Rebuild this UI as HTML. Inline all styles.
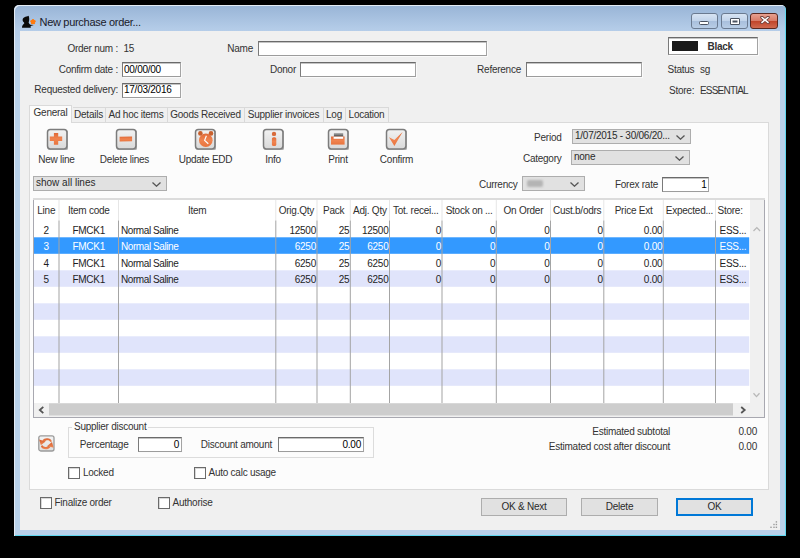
<!DOCTYPE html>
<html><head><meta charset="utf-8"><style>
html,body{margin:0;padding:0;width:800px;height:558px;overflow:hidden;background:#000;font-family:"Liberation Sans", sans-serif;}
.abs,.t,.frame,.client,.edit,.wbtn,.cbtn,.panel,.tab,.tabsel,.ico,.combo,.table,.group,.chk,.btn{position:absolute;box-sizing:border-box;}
.t{white-space:nowrap;}
.frame{background:linear-gradient(#98b4d6 0px,#a6c0df 12px,#b4cce8 24px,#b9d1ea 40px,#b9d1ea 100%);border-radius:5px 5px 0 0;box-shadow:inset 1px 1px 0 #e4ecf5, inset -1px -1px 0 #5fd8f0;}
.client{background:#f0f0f0;}
.edit{background:#fff;border:1px solid #a4a4a4;border-top-color:#6a6a6a;border-left-color:#7a7a7a;border-bottom-color:#9c9c9c;box-shadow:inset 0 1px 0 #c4c4c4, 1px 1px 0 #fafafa;}
.wbtn{border:1px solid #6a7a90;border-radius:3px;background:linear-gradient(#d7e4f3 0%,#c1d3ea 50%,#a8bfdc 51%,#b8cde6 100%);}
.cbtn{border:1px solid #5a2820;border-radius:3px;background:linear-gradient(#e8a090 0%,#d77a66 50%,#c0442a 51%,#d06a50 100%);}
.panel{background:#fcfcfc;border:1px solid #dadada;}
.tab{background:#f0f0f0;border:1px solid #d9d9d9;border-bottom:none;border-left:none;}
.tabsel{background:#fcfcfc;border:1px solid #dadada;border-bottom:none;}
.ico{width:20px;height:20px;border:1px solid #7a7a7a;border-radius:3px;background:linear-gradient(#f0f0f0,#dadada);box-shadow:inset 0 0 0 1px #f8f8f8;}
.combo{background:#e1e1e1;border:1px solid #adadad;}
.chev{position:absolute;right:6px;top:3px;width:5px;height:5px;border-right:1px solid #444;border-bottom:1px solid #444;transform:rotate(45deg);}
.table{background:#fff;border:1px solid #a6a6a6;border-top:2px solid #d6d6d6;}
.group{border:1px solid #dcdcdc;}
.chk{background:#fff;border:1px solid #6a6a6a;box-shadow:inset 1px 1px 0 #d8d8d8;}
.btn{background:#e1e1e1;border:1px solid #adadad;}
</style></head><body>
<div class="frame" style="left:14px;top:5px;width:772px;height:531px;"></div>
<div class="client" style="left:20px;top:31px;width:760px;height:499px;"></div>
<svg class="abs" style="left:18px;top:12px" width="20" height="18" viewBox="0 0 20 18"><path d="M5 9.5 C4.2 8 4.6 5.8 6.5 5.2 C7.8 4.7 9.2 4.6 10.6 3.8 C11.2 5.2 11.5 7.5 11 9.2 L10.6 10.5 C11 11.5 11.5 12.2 12.3 12.8 L15.8 13.1 L12.6 14.1 L12.8 15.8 L4 15.8 C4 14 4.6 12.6 6.2 11.5 C6.5 10.8 5.8 10.2 5 9.5 Z" fill="#0a0a0a"/><g fill="#ff7a10"><circle cx="15" cy="9.8" r="1.6"/><circle cx="15.00" cy="8.35" r="1.25"/><circle cx="16.38" cy="9.35" r="1.25"/><circle cx="15.85" cy="10.97" r="1.25"/><circle cx="14.15" cy="10.97" r="1.25"/><circle cx="13.62" cy="9.35" r="1.25"/></g></svg>
<div class="t" style="left:39.5px;top:14.86px;font-size:11px;letter-spacing:-0.3px;color:#1a1a2a;line-height:14px;">New purchase order...</div>
<div class="wbtn" style="left:691px;top:13px;width:27px;height:16px;"><div style="position:absolute;left:7px;top:7px;width:10px;height:4px;box-sizing:border-box;background:#fff;border:1px solid #4a5260;border-radius:1.5px"></div></div>
<div class="wbtn" style="left:721px;top:13px;width:27px;height:16px;"><div style="position:absolute;left:7.5px;top:3.5px;width:10px;height:7px;box-sizing:border-box;background:#4a5260;border:1px solid #4a5260;box-shadow:inset 0 0 0 1.5px #fff;border-radius:1px"></div></div>
<div class="cbtn" style="left:750px;top:13px;width:28px;height:16px;"><svg style="position:absolute;left:8.5px;top:2px" width="10" height="8" viewBox="0 0 10 8"><path d="M1.8 1.3 L8.2 6.6 M8.2 1.3 L1.8 6.6" stroke="#6a3a36" stroke-width="3.1" stroke-linecap="round"/><path d="M2 1.5 L8 6.4 M8 1.5 L2 6.4" stroke="#fff" stroke-width="1.6" stroke-linecap="round"/></svg></div>
<div class="t" style="right:682px;top:41.70px;font-size:10px;letter-spacing:-0.25px;color:#333;line-height:14px;">Order num :</div>
<div class="t" style="left:123.5px;top:41.70px;font-size:10px;letter-spacing:-0.25px;color:#333;line-height:14px;">15</div>
<div class="t" style="right:682px;top:62.70px;font-size:10px;letter-spacing:-0.25px;color:#333;line-height:14px;">Confirm date :</div>
<div class="edit" style="left:122px;top:62px;width:59px;height:15px;"></div>
<div class="t" style="left:124px;top:62.70px;font-size:10px;letter-spacing:-0.25px;color:#000;line-height:14px;">00/00/00</div>
<div class="t" style="right:682px;top:83.19px;font-size:10px;letter-spacing:-0.25px;color:#333;line-height:14px;">Requested delivery:</div>
<div class="edit" style="left:122px;top:83px;width:59px;height:15px;"></div>
<div class="t" style="left:124px;top:83.19px;font-size:10px;letter-spacing:-0.25px;color:#000;line-height:14px;">17/03/2016</div>
<div class="t" style="right:547px;top:41.70px;font-size:10px;letter-spacing:-0.25px;color:#333;line-height:14px;">Name</div>
<div class="edit" style="left:258px;top:41px;width:229px;height:15px;"></div>
<div class="t" style="right:504px;top:63.20px;font-size:10px;letter-spacing:-0.25px;color:#333;line-height:14px;">Donor</div>
<div class="edit" style="left:300px;top:62px;width:116px;height:15px;"></div>
<div class="t" style="right:279px;top:63.20px;font-size:10px;letter-spacing:-0.25px;color:#333;line-height:14px;">Reference</div>
<div class="edit" style="left:526px;top:62px;width:116px;height:15px;"></div>
<div class="edit" style="left:668px;top:37px;width:90px;height:18px;background:#fff"><div style="position:absolute;left:3px;top:3px;width:26px;height:10px;background:#1a1a1a"></div></div>
<div class="t" style="left:707.5px;top:39.70px;font-size:10px;letter-spacing:-0.3px;color:#333;line-height:14px;font-weight:bold;">Black</div>
<div class="t" style="left:667.5px;top:62.70px;font-size:10px;letter-spacing:-0.25px;color:#333;line-height:14px;">Status</div>
<div class="t" style="left:700px;top:62.70px;font-size:10px;letter-spacing:-0.25px;color:#333;line-height:14px;">sg</div>
<div class="t" style="left:669px;top:83.69px;font-size:10px;letter-spacing:-0.25px;color:#333;line-height:14px;">Store:</div>
<div class="t" style="left:700px;top:83.69px;font-size:10px;letter-spacing:-0.8px;color:#333;line-height:14px;">ESSENTIAL</div>
<div class="panel" style="left:29px;top:122px;width:740px;height:368px;"></div>
<div class="tab" style="left:72.5px;top:107px;width:33.0px;height:15px;"></div>
<div class="t" style="left:72.0px;width:33px;text-align:center;top:107.69px;font-size:10px;letter-spacing:-0.25px;color:#333;line-height:14px;">Details</div>
<div class="tab" style="left:105.5px;top:107px;width:62.0px;height:15px;"></div>
<div class="t" style="left:105.0px;width:62px;text-align:center;top:107.69px;font-size:10px;letter-spacing:-0.25px;color:#333;line-height:14px;">Ad hoc items</div>
<div class="tab" style="left:167.5px;top:107px;width:77.0px;height:15px;"></div>
<div class="t" style="left:167.0px;width:77px;text-align:center;top:107.69px;font-size:10px;letter-spacing:-0.25px;color:#333;line-height:14px;">Goods Received</div>
<div class="tab" style="left:244.5px;top:107px;width:79.0px;height:15px;"></div>
<div class="t" style="left:244.0px;width:79px;text-align:center;top:107.69px;font-size:10px;letter-spacing:-0.25px;color:#333;line-height:14px;">Supplier invoices</div>
<div class="tab" style="left:323.5px;top:107px;width:22.0px;height:15px;"></div>
<div class="t" style="left:323.0px;width:22px;text-align:center;top:107.69px;font-size:10px;letter-spacing:-0.25px;color:#333;line-height:14px;">Log</div>
<div class="tab" style="left:345.5px;top:107px;width:43.0px;height:15px;"></div>
<div class="t" style="left:345.0px;width:43px;text-align:center;top:107.69px;font-size:10px;letter-spacing:-0.25px;color:#333;line-height:14px;">Location</div>
<div class="tabsel" style="left:29px;top:105px;width:43px;height:18px;"></div>
<div class="t" style="left:29.0px;width:43px;text-align:center;top:105.69px;font-size:10px;letter-spacing:-0.25px;color:#333;line-height:14px;">General</div>
<svg class="abs" style="left:46px;top:128px" width="22" height="22" viewBox="0 0 22 22"><defs><linearGradient id="gb" x1="0" y1="0" x2="0" y2="1"><stop offset="0" stop-color="#f2f2f2"/><stop offset="1" stop-color="#d9d9d9"/></linearGradient><linearGradient id="go" x1="0" y1="0" x2="0" y2="1"><stop offset="0" stop-color="#e06a38"/><stop offset="0.5" stop-color="#f08450"/><stop offset="1" stop-color="#e8743e"/></linearGradient></defs><rect x="1.8" y="1.8" width="19.6" height="19.6" rx="3" fill="none" stroke="#505050" stroke-width="1.4" opacity="0.45" transform="translate(0.3,0.5)"/><rect x="1.5" y="1.5" width="19.4" height="19.4" rx="2.8" fill="url(#gb)" stroke="#7c7c7c" stroke-width="1.5"/><g transform="translate(1,1)"><path d="M6.9 4 h4.3 v3.6 h4 v4.3 h-4 v3.8 h-4.3 v-3.8 h-4.1 v-4.3 h4.1z" fill="url(#go)"/></g></svg>
<div class="t" style="left:26.5px;width:60px;text-align:center;top:152.69px;font-size:10px;letter-spacing:-0.25px;color:#333;line-height:14px;">New line</div>
<svg class="abs" style="left:115px;top:128px" width="22" height="22" viewBox="0 0 22 22"><defs><linearGradient id="gb" x1="0" y1="0" x2="0" y2="1"><stop offset="0" stop-color="#f2f2f2"/><stop offset="1" stop-color="#d9d9d9"/></linearGradient><linearGradient id="go" x1="0" y1="0" x2="0" y2="1"><stop offset="0" stop-color="#e06a38"/><stop offset="0.5" stop-color="#f08450"/><stop offset="1" stop-color="#e8743e"/></linearGradient></defs><rect x="1.8" y="1.8" width="19.6" height="19.6" rx="3" fill="none" stroke="#505050" stroke-width="1.4" opacity="0.45" transform="translate(0.3,0.5)"/><rect x="1.5" y="1.5" width="19.4" height="19.4" rx="2.8" fill="url(#gb)" stroke="#7c7c7c" stroke-width="1.5"/><g transform="translate(1,1)"><path d="M3.6 7.8 L16.1 7.6 L16.1 12.3 L3.6 12.6 Z" fill="url(#go)"/></g></svg>
<div class="t" style="left:89.5px;width:70px;text-align:center;top:152.69px;font-size:10px;letter-spacing:-0.25px;color:#333;line-height:14px;">Delete lines</div>
<svg class="abs" style="left:194px;top:128px" width="22" height="22" viewBox="0 0 22 22"><defs><linearGradient id="gb" x1="0" y1="0" x2="0" y2="1"><stop offset="0" stop-color="#f2f2f2"/><stop offset="1" stop-color="#d9d9d9"/></linearGradient><linearGradient id="go" x1="0" y1="0" x2="0" y2="1"><stop offset="0" stop-color="#e06a38"/><stop offset="0.5" stop-color="#f08450"/><stop offset="1" stop-color="#e8743e"/></linearGradient></defs><rect x="1.8" y="1.8" width="19.6" height="19.6" rx="3" fill="none" stroke="#505050" stroke-width="1.4" opacity="0.45" transform="translate(0.3,0.5)"/><rect x="1.5" y="1.5" width="19.4" height="19.4" rx="2.8" fill="url(#gb)" stroke="#7c7c7c" stroke-width="1.5"/><g transform="translate(1,1)"><circle cx="5.4" cy="4.4" r="2.3" fill="#c8602e"/><circle cx="16" cy="4.4" r="2.3" fill="#c8602e"/><circle cx="10.8" cy="11.2" r="6.8" fill="url(#go)"/><path d="M11.4 6.8 L9.6 11.4 L13.3 14.7" stroke="#fff" stroke-width="1.2" fill="none" stroke-linejoin="round"/></g></svg>
<div class="t" style="left:170.5px;width:70px;text-align:center;top:152.69px;font-size:10px;letter-spacing:-0.25px;color:#333;line-height:14px;">Update EDD</div>
<svg class="abs" style="left:262px;top:128px" width="22" height="22" viewBox="0 0 22 22"><defs><linearGradient id="gb" x1="0" y1="0" x2="0" y2="1"><stop offset="0" stop-color="#f2f2f2"/><stop offset="1" stop-color="#d9d9d9"/></linearGradient><linearGradient id="go" x1="0" y1="0" x2="0" y2="1"><stop offset="0" stop-color="#e06a38"/><stop offset="0.5" stop-color="#f08450"/><stop offset="1" stop-color="#e8743e"/></linearGradient></defs><rect x="1.8" y="1.8" width="19.6" height="19.6" rx="3" fill="none" stroke="#505050" stroke-width="1.4" opacity="0.45" transform="translate(0.3,0.5)"/><rect x="1.5" y="1.5" width="19.4" height="19.4" rx="2.8" fill="url(#gb)" stroke="#7c7c7c" stroke-width="1.5"/><g transform="translate(1,1)"><circle cx="11" cy="4.9" r="2.2" fill="#d86a3a"/><rect x="8.9" y="8.2" width="4.4" height="8.8" rx="1.6" fill="url(#go)"/></g></svg>
<div class="t" style="left:253.0px;width:40px;text-align:center;top:152.69px;font-size:10px;letter-spacing:-0.25px;color:#333;line-height:14px;">Info</div>
<svg class="abs" style="left:327px;top:128px" width="22" height="22" viewBox="0 0 22 22"><defs><linearGradient id="gb" x1="0" y1="0" x2="0" y2="1"><stop offset="0" stop-color="#f2f2f2"/><stop offset="1" stop-color="#d9d9d9"/></linearGradient><linearGradient id="go" x1="0" y1="0" x2="0" y2="1"><stop offset="0" stop-color="#e06a38"/><stop offset="0.5" stop-color="#f08450"/><stop offset="1" stop-color="#e8743e"/></linearGradient></defs><rect x="1.8" y="1.8" width="19.6" height="19.6" rx="3" fill="none" stroke="#505050" stroke-width="1.4" opacity="0.45" transform="translate(0.3,0.5)"/><rect x="1.5" y="1.5" width="19.4" height="19.4" rx="2.8" fill="url(#gb)" stroke="#7c7c7c" stroke-width="1.5"/><g transform="translate(1,1)"><defs><linearGradient id="gp" x1="0" y1="0" x2="0" y2="1"><stop offset="0" stop-color="#b8b8b8"/><stop offset="1" stop-color="#2a2a2a"/></linearGradient></defs><rect x="5.9" y="4" width="9.3" height="4.2" fill="url(#gp)"/><rect x="3" y="7.5" width="13.6" height="8.1" fill="url(#go)"/><rect x="5.6" y="7.6" width="9.6" height="2.2" fill="#fff"/></g></svg>
<div class="t" style="left:318.0px;width:40px;text-align:center;top:152.69px;font-size:10px;letter-spacing:-0.25px;color:#333;line-height:14px;">Print</div>
<svg class="abs" style="left:385px;top:128px" width="22" height="22" viewBox="0 0 22 22"><defs><linearGradient id="gb" x1="0" y1="0" x2="0" y2="1"><stop offset="0" stop-color="#f2f2f2"/><stop offset="1" stop-color="#d9d9d9"/></linearGradient><linearGradient id="go" x1="0" y1="0" x2="0" y2="1"><stop offset="0" stop-color="#e06a38"/><stop offset="0.5" stop-color="#f08450"/><stop offset="1" stop-color="#e8743e"/></linearGradient></defs><rect x="1.8" y="1.8" width="19.6" height="19.6" rx="3" fill="none" stroke="#505050" stroke-width="1.4" opacity="0.45" transform="translate(0.3,0.5)"/><rect x="1.5" y="1.5" width="19.4" height="19.4" rx="2.8" fill="url(#gb)" stroke="#7c7c7c" stroke-width="1.5"/><g transform="translate(1,1)"><path d="M3 8.2 L8.4 11 L16.6 3 L8.4 17 Z" fill="url(#go)"/></g></svg>
<div class="t" style="left:371.5px;width:50px;text-align:center;top:152.69px;font-size:10px;letter-spacing:-0.25px;color:#333;line-height:14px;">Confirm</div>
<div class="t" style="right:238.5px;top:130.69px;font-size:10px;letter-spacing:-0.25px;color:#333;line-height:14px;">Period</div>
<div class="combo" style="left:572px;top:129px;width:119px;height:15px;"><svg style="position:absolute;right:5px;top:5px" width="9" height="5" viewBox="0 0 9 5"><path d="M0.5 0.5 L4.5 4.2 L8.5 0.5" stroke="#555" stroke-width="1.3" fill="none"/></svg></div>
<div class="t" style="left:575px;top:128.69px;font-size:10px;letter-spacing:-0.25px;color:#2a2a2a;line-height:14px;">1/07/2015 - 30/06/20...</div>
<div class="t" style="right:238.5px;top:151.69px;font-size:10px;letter-spacing:-0.25px;color:#333;line-height:14px;">Category</div>
<div class="combo" style="left:571px;top:150px;width:119px;height:15px;"><svg style="position:absolute;right:5px;top:5px" width="9" height="5" viewBox="0 0 9 5"><path d="M0.5 0.5 L4.5 4.2 L8.5 0.5" stroke="#555" stroke-width="1.3" fill="none"/></svg></div>
<div class="t" style="left:574px;top:149.69px;font-size:10px;letter-spacing:-0.25px;color:#2a2a2a;line-height:14px;">none</div>
<div class="combo" style="left:33px;top:176px;width:134px;height:15px;"><svg style="position:absolute;right:5px;top:5px" width="9" height="5" viewBox="0 0 9 5"><path d="M0.5 0.5 L4.5 4.2 L8.5 0.5" stroke="#555" stroke-width="1.3" fill="none"/></svg></div>
<div class="t" style="left:36px;top:175.69px;font-size:10px;letter-spacing:0px;color:#2a2a2a;line-height:14px;">show all lines</div>
<div class="t" style="right:282.5px;top:177.69px;font-size:10px;letter-spacing:-0.25px;color:#333;line-height:14px;">Currency</div>
<div class="combo" style="left:522px;top:176px;width:63px;height:15px;"><svg style="position:absolute;right:5px;top:5px" width="9" height="5" viewBox="0 0 9 5"><path d="M0.5 0.5 L4.5 4.2 L8.5 0.5" stroke="#555" stroke-width="1.3" fill="none"/></svg><div style="position:absolute;left:4px;top:3px;width:16px;height:7px;background:#b4b4b4;filter:blur(1.3px);border-radius:2px"></div></div>
<div class="t" style="right:142px;top:177.69px;font-size:10px;letter-spacing:-0.25px;color:#333;line-height:14px;">Forex rate</div>
<div class="edit" style="left:662px;top:177px;width:47px;height:15px;"></div>
<div class="t" style="right:93.5px;top:177.69px;font-size:10px;letter-spacing:-0.25px;color:#000;line-height:14px;">1</div>
<svg class="abs" style="left:0;top:0" width="800" height="558"><rect x="33.5" y="198.5" width="731" height="219" fill="#fff" stroke="#a8a8b0" stroke-width="1"/><rect x="33" y="198" width="732" height="2" fill="#dcdcdc"/><rect x="34" y="237.3" width="715.2" height="16.5" fill="#3399ff"/><rect x="34" y="270.3" width="715.2" height="16.5" fill="#e0e4fb"/><rect x="34" y="303.3" width="715.2" height="16.5" fill="#e0e4fb"/><rect x="34" y="336.3" width="715.2" height="16.5" fill="#e0e4fb"/><rect x="34" y="369.3" width="715.2" height="16.5" fill="#e0e4fb"/><rect x="58.5" y="200" width="1" height="20.5" fill="#e6e6e6"/><rect x="58.5" y="220.5" width="1" height="182.5" fill="#a4a4a4"/><rect x="118.0" y="200" width="1" height="20.5" fill="#e6e6e6"/><rect x="118.0" y="220.5" width="1" height="182.5" fill="#a4a4a4"/><rect x="275.3" y="200" width="1" height="20.5" fill="#e6e6e6"/><rect x="275.3" y="220.5" width="1" height="182.5" fill="#a4a4a4"/><rect x="316.5" y="200" width="1" height="20.5" fill="#e6e6e6"/><rect x="316.5" y="220.5" width="1" height="182.5" fill="#a4a4a4"/><rect x="349.8" y="200" width="1" height="20.5" fill="#e6e6e6"/><rect x="349.8" y="220.5" width="1" height="182.5" fill="#a4a4a4"/><rect x="389.0" y="200" width="1" height="20.5" fill="#e6e6e6"/><rect x="389.0" y="220.5" width="1" height="182.5" fill="#a4a4a4"/><rect x="441.5" y="200" width="1" height="20.5" fill="#e6e6e6"/><rect x="441.5" y="220.5" width="1" height="182.5" fill="#a4a4a4"/><rect x="495.8" y="200" width="1" height="20.5" fill="#e6e6e6"/><rect x="495.8" y="220.5" width="1" height="182.5" fill="#a4a4a4"/><rect x="550.0" y="200" width="1" height="20.5" fill="#e6e6e6"/><rect x="550.0" y="220.5" width="1" height="182.5" fill="#a4a4a4"/><rect x="603.3" y="200" width="1" height="20.5" fill="#e6e6e6"/><rect x="603.3" y="220.5" width="1" height="182.5" fill="#a4a4a4"/><rect x="662.8" y="200" width="1" height="20.5" fill="#e6e6e6"/><rect x="662.8" y="220.5" width="1" height="182.5" fill="#a4a4a4"/><rect x="715.0" y="200" width="1" height="20.5" fill="#e6e6e6"/><rect x="715.0" y="220.5" width="1" height="182.5" fill="#a4a4a4"/><rect x="750" y="200" width="14" height="203" fill="#f0f0f0"/><path d="M753.5 231 L756.8 227.6 L760.1 231" stroke="#b8b8b8" stroke-width="1.3" fill="none"/><path d="M753.5 393.2 L756.5 396.6 L759.5 393.2" stroke="#b8b8b8" stroke-width="1.3" fill="none"/><rect x="34" y="403" width="730" height="14" fill="#f0f0f0"/><rect x="49" y="403.3" width="684" height="12.2" fill="#cdcdcd"/><path d="M43.3 406.8 L39.8 410 L43.3 413.2" stroke="#555" stroke-width="1.8" fill="none"/><path d="M741.2 407 L744.7 410 L741.2 413" stroke="#555" stroke-width="1.8" fill="none"/></svg>
<div class="t" style="left:34.0px;width:24.5px;text-align:center;top:203.50px;font-size:10px;letter-spacing:-0.25px;color:#303030;line-height:14px;white-space:nowrap;overflow:hidden">Line</div>
<div class="t" style="left:59.5px;width:58.5px;text-align:center;top:203.50px;font-size:10px;letter-spacing:-0.25px;color:#303030;line-height:14px;white-space:nowrap;overflow:hidden">Item code</div>
<div class="t" style="left:119.0px;width:156.3px;text-align:center;top:203.50px;font-size:10px;letter-spacing:-0.25px;color:#303030;line-height:14px;white-space:nowrap;overflow:hidden">Item</div>
<div class="t" style="left:276.29999999999995px;width:40.19999999999999px;text-align:center;top:203.50px;font-size:10px;letter-spacing:-0.25px;color:#303030;line-height:14px;white-space:nowrap;overflow:hidden">Orig.Qty</div>
<div class="t" style="left:317.5px;width:32.30000000000001px;text-align:center;top:203.50px;font-size:10px;letter-spacing:-0.25px;color:#303030;line-height:14px;white-space:nowrap;overflow:hidden">Pack</div>
<div class="t" style="left:350.79999999999995px;width:38.19999999999999px;text-align:center;top:203.50px;font-size:10px;letter-spacing:-0.25px;color:#303030;line-height:14px;white-space:nowrap;overflow:hidden">Adj. Qty</div>
<div class="t" style="left:390.0px;width:51.5px;text-align:center;top:203.50px;font-size:10px;letter-spacing:-0.25px;color:#303030;line-height:14px;white-space:nowrap;overflow:hidden">Tot. recei...</div>
<div class="t" style="left:442.5px;width:53.30000000000001px;text-align:center;top:203.50px;font-size:10px;letter-spacing:-0.25px;color:#303030;line-height:14px;white-space:nowrap;overflow:hidden">Stock on ...</div>
<div class="t" style="left:496.79999999999995px;width:53.19999999999999px;text-align:center;top:203.50px;font-size:10px;letter-spacing:-0.25px;color:#303030;line-height:14px;white-space:nowrap;overflow:hidden">On Order</div>
<div class="t" style="left:551.0px;width:52.299999999999955px;text-align:center;top:203.50px;font-size:10px;letter-spacing:-0.25px;color:#303030;line-height:14px;white-space:nowrap;overflow:hidden">Cust.b/odrs</div>
<div class="t" style="left:604.3px;width:58.5px;text-align:center;top:203.50px;font-size:10px;letter-spacing:-0.25px;color:#303030;line-height:14px;white-space:nowrap;overflow:hidden">Price Ext</div>
<div class="t" style="left:663.8px;width:51.200000000000045px;text-align:center;top:203.50px;font-size:10px;letter-spacing:-0.25px;color:#303030;line-height:14px;white-space:nowrap;overflow:hidden">Expected...</div>
<div class="t" style="left:717.5px;top:203.50px;font-size:10px;letter-spacing:-0.25px;color:#303030;line-height:14px;">Store:</div>
<div class="t" style="left:34.0px;width:24.5px;text-align:center;top:223.50px;font-size:10px;letter-spacing:-0.25px;color:#1e1e1e;line-height:14px;">2</div>
<div class="t" style="left:59.5px;width:58.5px;text-align:center;top:223.50px;font-size:10px;letter-spacing:-0.25px;color:#1e1e1e;line-height:14px;">FMCK1</div>
<div class="t" style="left:121.0px;top:223.50px;font-size:10px;letter-spacing:-0.42px;color:#1e1e1e;line-height:14px;">Normal Saline</div>
<div class="t" style="right:484.0px;top:223.50px;font-size:10px;letter-spacing:-0.25px;color:#1e1e1e;line-height:14px;">12500</div>
<div class="t" style="right:450.7px;top:223.50px;font-size:10px;letter-spacing:-0.25px;color:#1e1e1e;line-height:14px;">25</div>
<div class="t" style="right:411.5px;top:223.50px;font-size:10px;letter-spacing:-0.25px;color:#1e1e1e;line-height:14px;">12500</div>
<div class="t" style="right:359.0px;top:223.50px;font-size:10px;letter-spacing:-0.25px;color:#1e1e1e;line-height:14px;">0</div>
<div class="t" style="right:304.7px;top:223.50px;font-size:10px;letter-spacing:-0.25px;color:#1e1e1e;line-height:14px;">0</div>
<div class="t" style="right:250.5px;top:223.50px;font-size:10px;letter-spacing:-0.25px;color:#1e1e1e;line-height:14px;">0</div>
<div class="t" style="right:197.20000000000005px;top:223.50px;font-size:10px;letter-spacing:-0.25px;color:#1e1e1e;line-height:14px;">0</div>
<div class="t" style="right:137.70000000000005px;top:223.50px;font-size:10px;letter-spacing:-0.25px;color:#1e1e1e;line-height:14px;">0.00</div>
<div class="t" style="left:719.5px;top:223.50px;font-size:10px;letter-spacing:-0.25px;color:#1e1e1e;line-height:14px;">ESS...</div>
<div class="t" style="left:34.0px;width:24.5px;text-align:center;top:240.00px;font-size:10px;letter-spacing:-0.25px;color:#fff;line-height:14px;">3</div>
<div class="t" style="left:59.5px;width:58.5px;text-align:center;top:240.00px;font-size:10px;letter-spacing:-0.25px;color:#fff;line-height:14px;">FMCK1</div>
<div class="t" style="left:121.0px;top:240.00px;font-size:10px;letter-spacing:-0.42px;color:#fff;line-height:14px;">Normal Saline</div>
<div class="t" style="right:484.0px;top:240.00px;font-size:10px;letter-spacing:-0.25px;color:#fff;line-height:14px;">6250</div>
<div class="t" style="right:450.7px;top:240.00px;font-size:10px;letter-spacing:-0.25px;color:#fff;line-height:14px;">25</div>
<div class="t" style="right:411.5px;top:240.00px;font-size:10px;letter-spacing:-0.25px;color:#fff;line-height:14px;">6250</div>
<div class="t" style="right:359.0px;top:240.00px;font-size:10px;letter-spacing:-0.25px;color:#fff;line-height:14px;">0</div>
<div class="t" style="right:304.7px;top:240.00px;font-size:10px;letter-spacing:-0.25px;color:#fff;line-height:14px;">0</div>
<div class="t" style="right:250.5px;top:240.00px;font-size:10px;letter-spacing:-0.25px;color:#fff;line-height:14px;">0</div>
<div class="t" style="right:197.20000000000005px;top:240.00px;font-size:10px;letter-spacing:-0.25px;color:#fff;line-height:14px;">0</div>
<div class="t" style="right:137.70000000000005px;top:240.00px;font-size:10px;letter-spacing:-0.25px;color:#fff;line-height:14px;">0.00</div>
<div class="t" style="left:719.5px;top:240.00px;font-size:10px;letter-spacing:-0.25px;color:#fff;line-height:14px;">ESS...</div>
<div class="t" style="left:34.0px;width:24.5px;text-align:center;top:256.50px;font-size:10px;letter-spacing:-0.25px;color:#1e1e1e;line-height:14px;">4</div>
<div class="t" style="left:59.5px;width:58.5px;text-align:center;top:256.50px;font-size:10px;letter-spacing:-0.25px;color:#1e1e1e;line-height:14px;">FMCK1</div>
<div class="t" style="left:121.0px;top:256.50px;font-size:10px;letter-spacing:-0.42px;color:#1e1e1e;line-height:14px;">Normal Saline</div>
<div class="t" style="right:484.0px;top:256.50px;font-size:10px;letter-spacing:-0.25px;color:#1e1e1e;line-height:14px;">6250</div>
<div class="t" style="right:450.7px;top:256.50px;font-size:10px;letter-spacing:-0.25px;color:#1e1e1e;line-height:14px;">25</div>
<div class="t" style="right:411.5px;top:256.50px;font-size:10px;letter-spacing:-0.25px;color:#1e1e1e;line-height:14px;">6250</div>
<div class="t" style="right:359.0px;top:256.50px;font-size:10px;letter-spacing:-0.25px;color:#1e1e1e;line-height:14px;">0</div>
<div class="t" style="right:304.7px;top:256.50px;font-size:10px;letter-spacing:-0.25px;color:#1e1e1e;line-height:14px;">0</div>
<div class="t" style="right:250.5px;top:256.50px;font-size:10px;letter-spacing:-0.25px;color:#1e1e1e;line-height:14px;">0</div>
<div class="t" style="right:197.20000000000005px;top:256.50px;font-size:10px;letter-spacing:-0.25px;color:#1e1e1e;line-height:14px;">0</div>
<div class="t" style="right:137.70000000000005px;top:256.50px;font-size:10px;letter-spacing:-0.25px;color:#1e1e1e;line-height:14px;">0.00</div>
<div class="t" style="left:719.5px;top:256.50px;font-size:10px;letter-spacing:-0.25px;color:#1e1e1e;line-height:14px;">ESS...</div>
<div class="t" style="left:34.0px;width:24.5px;text-align:center;top:273.00px;font-size:10px;letter-spacing:-0.25px;color:#1e1e1e;line-height:14px;">5</div>
<div class="t" style="left:59.5px;width:58.5px;text-align:center;top:273.00px;font-size:10px;letter-spacing:-0.25px;color:#1e1e1e;line-height:14px;">FMCK1</div>
<div class="t" style="left:121.0px;top:273.00px;font-size:10px;letter-spacing:-0.42px;color:#1e1e1e;line-height:14px;">Normal Saline</div>
<div class="t" style="right:484.0px;top:273.00px;font-size:10px;letter-spacing:-0.25px;color:#1e1e1e;line-height:14px;">6250</div>
<div class="t" style="right:450.7px;top:273.00px;font-size:10px;letter-spacing:-0.25px;color:#1e1e1e;line-height:14px;">25</div>
<div class="t" style="right:411.5px;top:273.00px;font-size:10px;letter-spacing:-0.25px;color:#1e1e1e;line-height:14px;">6250</div>
<div class="t" style="right:359.0px;top:273.00px;font-size:10px;letter-spacing:-0.25px;color:#1e1e1e;line-height:14px;">0</div>
<div class="t" style="right:304.7px;top:273.00px;font-size:10px;letter-spacing:-0.25px;color:#1e1e1e;line-height:14px;">0</div>
<div class="t" style="right:250.5px;top:273.00px;font-size:10px;letter-spacing:-0.25px;color:#1e1e1e;line-height:14px;">0</div>
<div class="t" style="right:197.20000000000005px;top:273.00px;font-size:10px;letter-spacing:-0.25px;color:#1e1e1e;line-height:14px;">0</div>
<div class="t" style="right:137.70000000000005px;top:273.00px;font-size:10px;letter-spacing:-0.25px;color:#1e1e1e;line-height:14px;">0.00</div>
<div class="t" style="left:719.5px;top:273.00px;font-size:10px;letter-spacing:-0.25px;color:#1e1e1e;line-height:14px;">ESS...</div>
<svg class="abs" style="left:37px;top:434px" width="19" height="19" viewBox="-1 -1 19 19"><defs><linearGradient id="gb2" x1="0" y1="0" x2="0" y2="1"><stop offset="0" stop-color="#f4f4f4"/><stop offset="1" stop-color="#dedede"/></linearGradient><linearGradient id="go2" x1="0" y1="0" x2="0" y2="1"><stop offset="0" stop-color="#d8602e"/><stop offset="1" stop-color="#f08a58"/></linearGradient></defs><rect x="0.8" y="0.8" width="15.2" height="15.2" rx="2" fill="url(#gb2)" stroke="#9a9a9a" stroke-width="1.3"/><g fill="url(#go2)" transform="translate(8.4 8.6) scale(1.2) translate(-8.25 -8.15)"><path d="M12.9 6.4 C12.2 3.2 6.8 2.6 4.9 5.6 L6.6 6.8 C8 4.9 10.8 5.1 11.4 6.9 Z"/><path d="M2.2 4.8 L7.6 6.4 L3.6 9.6 Z"/><path d="M3.6 10.1 C4.3 13.3 9.7 13.9 11.6 10.9 L9.9 9.7 C8.5 11.6 5.7 11.4 5.1 9.6 Z"/><path d="M14.3 11.7 L8.9 10.1 L12.9 6.9 Z"/></g></svg>
<div class="group" style="left:68px;top:427px;width:306px;height:31px;"></div>
<div class="abs" style="left:72px;top:422px;width:76px;height:10px;background:#fcfcfc"></div>
<div class="t" style="left:74px;top:420.19px;font-size:10px;letter-spacing:-0.25px;color:#333;line-height:14px;">Supplier discount</div>
<div class="t" style="right:671.5px;top:437.69px;font-size:10px;letter-spacing:-0.25px;color:#333;line-height:14px;">Percentage</div>
<div class="edit" style="left:138px;top:437px;width:44px;height:15px;"></div>
<div class="t" style="right:621px;top:437.69px;font-size:10px;letter-spacing:-0.25px;color:#000;line-height:14px;">0</div>
<div class="t" style="right:528px;top:437.69px;font-size:10px;letter-spacing:-0.25px;color:#333;line-height:14px;">Discount amount</div>
<div class="edit" style="left:278px;top:437px;width:86px;height:15px;"></div>
<div class="t" style="right:439px;top:437.69px;font-size:10px;letter-spacing:-0.25px;color:#000;line-height:14px;">0.00</div>
<div class="chk" style="left:68px;top:467px;width:12px;height:12px;"></div>
<div class="t" style="left:83px;top:466.19px;font-size:10px;letter-spacing:-0.25px;color:#333;line-height:14px;">Locked</div>
<div class="chk" style="left:194px;top:467px;width:12px;height:12px;"></div>
<div class="t" style="left:208.5px;top:466.19px;font-size:10px;letter-spacing:-0.25px;color:#333;line-height:14px;">Auto calc usage</div>
<div class="t" style="right:130px;top:424.69px;font-size:10px;letter-spacing:-0.25px;color:#333;line-height:14px;">Estimated subtotal</div>
<div class="t" style="right:43px;top:424.69px;font-size:10px;letter-spacing:-0.25px;color:#333;line-height:14px;">0.00</div>
<div class="t" style="right:130px;top:440.19px;font-size:10px;letter-spacing:-0.25px;color:#333;line-height:14px;">Estimated cost after discount</div>
<div class="t" style="right:43px;top:440.19px;font-size:10px;letter-spacing:-0.25px;color:#333;line-height:14px;">0.00</div>
<div class="chk" style="left:40px;top:497px;width:12px;height:12px;"></div>
<div class="t" style="left:54.5px;top:495.69px;font-size:10px;letter-spacing:-0.25px;color:#333;line-height:14px;">Finalize order</div>
<div class="chk" style="left:158px;top:497px;width:12px;height:12px;"></div>
<div class="t" style="left:172.5px;top:495.69px;font-size:10px;letter-spacing:-0.25px;color:#333;line-height:14px;">Authorise</div>
<div class="btn" style="left:481px;top:498px;width:86px;height:18px;"></div>
<div class="t" style="left:481.0px;width:86px;text-align:center;top:500.19px;font-size:10px;letter-spacing:-0.25px;color:#2a2a2a;line-height:14px;">OK &amp; Next</div>
<div class="btn" style="left:581px;top:498px;width:77px;height:18px;"></div>
<div class="t" style="left:581.0px;width:77px;text-align:center;top:500.19px;font-size:10px;letter-spacing:-0.25px;color:#2a2a2a;line-height:14px;">Delete</div>
<div class="btn" style="left:676px;top:498px;width:77px;height:18px;border:2px solid #0078d7"></div>
<div class="t" style="left:676.0px;width:77px;text-align:center;top:500.19px;font-size:10px;letter-spacing:-0.25px;color:#2a2a2a;line-height:14px;">OK</div>
<svg class="abs" style="left:768px;top:518px" width="12" height="12"><rect x="7.7" y="3.2" width="1.4" height="1.4" fill="#9a9a9a"/><rect x="5.3" y="5.8" width="1.4" height="1.4" fill="#9a9a9a"/><rect x="7.7" y="5.8" width="1.4" height="1.4" fill="#9a9a9a"/><rect x="2.3" y="8.600000000000001" width="1.4" height="1.4" fill="#9a9a9a"/><rect x="5.3" y="8.600000000000001" width="1.4" height="1.4" fill="#9a9a9a"/><rect x="7.7" y="8.600000000000001" width="1.4" height="1.4" fill="#9a9a9a"/></svg>
</body></html>
